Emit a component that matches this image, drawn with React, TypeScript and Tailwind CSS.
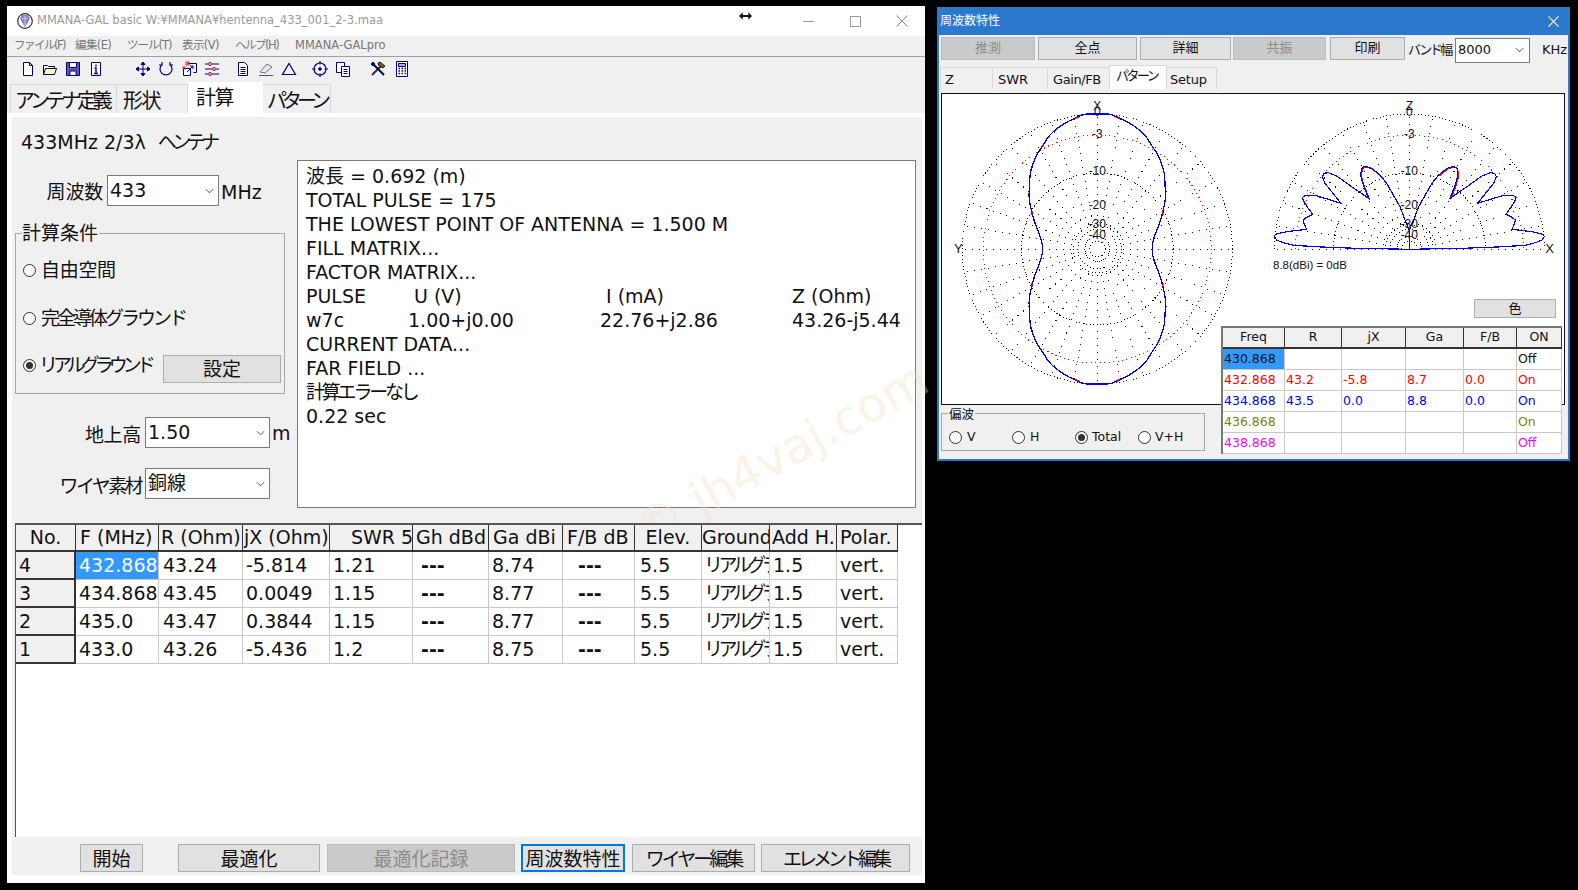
import React from "react";

const UI = { fontFamily: '"DejaVu Sans","Noto Sans CJK JP",sans-serif' };

const Ico = ({ children, className = "" }: { children: React.ReactNode; className?: string }) => (
  <svg viewBox="0 0 16 16" className={"w-[16px] h-[16px] shrink-0 " + className} fill="none" stroke="#000080" strokeWidth="1">
    {children}
  </svg>
);

function Toolbar() {
  return (
    <div className="h-[26px] flex items-center bg-[#f0f0f0] pl-[13px] pb-[2px]">
      <Ico><path d="M3.5 1.5h6l3 3v10h-9z" fill="#fff" /><path d="M9.5 1.5v3h3" /></Ico>
      <Ico className="ml-[6px]"><path d="M1.5 13.5v-9h4l1 1h6v2h2l-2 6z" fill="#fff6b0" /><path d="M1.5 13.5l2-6h11" /></Ico>
      <Ico className="ml-[7px]"><path d="M1.5 1.5h13v13h-13z" fill="#5a5ab0" /><path d="M4.5 1.5h7v5h-7zM5 10h6v4.5H5z" fill="#fff" /></Ico>
      <Ico className="ml-[7px]"><path d="M3.5 1.5h9v13h-9z" fill="#fff" /><path d="M8 3.5v2M6.500 7h1.500v5M6 12.500h4" strokeWidth="1.400" /></Ico>
      <Ico className="ml-[31px]"><path d="M8 1v14M1 8h14M8 1L6 3.500h4zM8 15l-2-2.500h4zM1 8l2.500-2v4zM15 8l-2.500-2v4z" fill="#000080" /></Ico>
      <Ico className="ml-[7px]"><path d="M4 3.500a6 6 0 1 0 8 0M4 1v3H1M12 1v3h3" strokeWidth="1.200" /></Ico>
      <Ico className="ml-[8px]"><path d="M1.500 7.500h7v7h-7z" fill="#fff" /><path d="M5.500 2.500h9v9h-3" /><path d="M5 11l6-6M8 5h3v3" /><path d="M4 1h3v3H4zM1 6h2v2H1z" stroke="#d02020" /></Ico>
      <Ico className="ml-[6px]"><path d="M1 3h14M1 8h14M1 13h14" /><path d="M5 1.500h2v3H5zM9 6.500h2v3H9zM5 11.500h2v3H5z" stroke="#d02020" fill="#fff" /></Ico>
      <Ico className="ml-[15px]"><path d="M3.500 1.500h6l3 3v10h-9z" fill="#fff" /><path d="M5.500 6.500h5M5.500 8.500h5M5.500 10.500h5M5.500 12.500h5" /></Ico>
      <Ico className="ml-[7px]"><path d="M2 11l7-8 5 3-7 6z" fill="#e8e8e8" stroke="#707090" /><path d="M1 14.500h14" stroke="#505090" /></Ico>
      <Ico className="ml-[7px]"><path d="M8 2.500l6.500 11h-13z" strokeWidth="1.200" /></Ico>
      <Ico className="ml-[15px]"><circle cx="8" cy="8" r="6" strokeWidth="1.200" /><circle cx="8" cy="8" r="1.300" fill="#000080" /><path d="M8 0v3.500M8 12.500V16M0 8h3.500M12.500 8H16" strokeWidth="1.200" /></Ico>
      <Ico className="ml-[7px]"><path d="M1.500 1.500h8v10h-8z" fill="#fff" /><path d="M6.500 5.500h8v10h-8z" fill="#fff" /><path d="M8.500 8.500h4M8.500 10.500h4M8.500 12.500h4" /></Ico>
      <Ico className="ml-[19px]"><path d="M2 14L11 5" stroke="#303030" strokeWidth="2" /><path d="M8 2l2-1 5 4-2 2-2-1-2-1z" fill="#805020" stroke="#302010" /><path d="M14 14L4 4" stroke="#000050" strokeWidth="2" /><path d="M1 3l2-2 2 2-2 2z" fill="#000050" /></Ico>
      <Ico className="ml-[8px]"><path d="M2.500 .5h11v15h-11z" fill="#fff" /><path d="M4.500 2.500h7v3h-7z" fill="#b0b0d8" /><path d="M4.500 7.500h1.500M7.500 7.500h1.500M10.500 7.500h1.500M4.500 10h1.500M7.500 10h1.500M10.500 10h1.500M4.500 12.500h1.500M7.500 12.500h1.500M10.500 12.500h1.500" strokeWidth="1.500" /></Ico>
    </div>
  );
}

function Combo({ value, w }: { value: string; w: string }) {
  return (
    <div className={"h-[31px] shrink-0 bg-white border border-[#7a7a7a] flex items-center pl-[2px] pr-[4px] text-[19px] text-[#111] " + w}>
      <span className="flex-1 leading-none">{value}</span>
      <svg viewBox="0 0 10 6" className="w-[9px] h-[6px]" fill="none" stroke="#444" strokeWidth="1"><path d="M1 1l4 4 4-4" /></svg>
    </div>
  );
}

function Radio({ on = false }: { on?: boolean }) {
  return (
    <span className="shrink-0 rounded-full bg-white border border-[#333] flex items-center justify-center w-[13px] h-[13px]">
      {on && <span className="w-[7px] h-[7px] rounded-full bg-[#333]" />}
    </span>
  );
}

function WinBtn({ label, w, disabled = false, focus = false, className = "" }: { label: string; w: string; disabled?: boolean; focus?: boolean; className?: string }) {
  const tone = disabled
    ? "bg-[#cacaca] border-[#bdbdbd] text-[#8c8c8c]"
    : focus
    ? "bg-[#e1e1e1] border-[#0078d7] border-2 text-[#111]"
    : "bg-[#e1e1e1] border-[#adadad] text-[#111]";
  return <div className={"border flex items-center justify-center whitespace-nowrap " + tone + " " + w + " " + className}>{label}</div>;
}

const colW = ["w-[60px]", "w-[83px]", "w-[84px]", "w-[87px]", "w-[83px]", "w-[76px]", "w-[74px]", "w-[72px]", "w-[67px]", "w-[68px]", "w-[67px]", "w-[61px]"];
const head = ["No.", "F (MHz)", "R (Ohm)", "jX (Ohm)", "SWR 50", "Gh dBd", "Ga dBi", "F/B dB", "Elev.", "Ground", "Add H.", "Polar."];
const headAlign = ["justify-center", "pl-[4px]", "pl-[2px]", "pl-[1px]", "pl-[21px]", "pl-[3px]", "pl-[4px]", "pl-[4px]", "justify-center", "pl-[0px]", "pl-[2px]", "pl-[3px]"];
const rows = [
  ["4", "432.868", "43.24", "-5.814", "1.21", "---", "8.74", "---", "5.5", "リアルグランド", "1.5", "vert."],
  ["3", "434.868", "43.45", "0.0049", "1.15", "---", "8.77", "---", "5.5", "リアルグランド", "1.5", "vert."],
  ["2", "435.0", "43.47", "0.3844", "1.15", "---", "8.77", "---", "5.5", "リアルグランド", "1.5", "vert."],
  ["1", "433.0", "43.26", "-5.436", "1.2", "---", "8.75", "---", "5.5", "リアルグランド", "1.5", "vert."],
];

function ResultGrid() {
  return (
    <div className="relative z-10 flex-1 ml-[3px] bg-white border-l border-t-2 border-[#555] text-[19px] text-[#111] overflow-hidden">
      <div className="flex h-[27px]">
        {head.map((h, i) => (
          <div key={h} className={"flex items-center overflow-hidden whitespace-nowrap bg-[#f0f0f0] border-r border-[#333] border-b-2 " + colW[i] + " " + headAlign[i]}>{h}</div>
        ))}
      </div>
      {rows.map((r, ri) => (
        <div key={ri} className="flex h-[28px]">
          {r.map((c, i) => (
            <div
              key={i}
              className={
                "flex items-center overflow-hidden whitespace-nowrap border-b border-r " +
                colW[i] +
                " " +
                (i === 0
                  ? "bg-[#f0f0f0] border-b-2 border-r-2 border-[#333] pl-[3px]"
                  : ri === 0 && i === 1
                  ? "bg-[#3399ff] text-white border-[#c8c8c8] pl-[3px]"
                  : i === 5
                  ? "border-[#c8c8c8] pl-[8px] font-bold"
                  : i === 7
                  ? "border-[#c8c8c8] pl-[15px] font-bold"
                  : i === 8
                  ? "border-[#c8c8c8] pl-[5px]"
                  : i === 2
                  ? "border-[#c8c8c8] pl-[4px]"
                  : i === 9
                  ? "border-[#c8c8c8] pl-[2px] text-[19px] tracking-[-4.500px]"
                  : "border-[#c8c8c8] pl-[3px]")
              }
            >
              {c}
            </div>
          ))}
        </div>
      ))}
    </div>
  );
}

function MainWindow() {
  return (
    <div className="absolute left-[7px] top-[6px] w-[918px] h-[877px] bg-white flex flex-col" style={UI}>
      <div className="h-[30px] flex items-center bg-white pl-[10px] shrink-0">
        <svg viewBox="0 0 16 16" className="w-[16px] h-[16px]">
          <circle cx="8" cy="8" r="7.300" fill="#fff" stroke="#333" strokeWidth="1.200" />
          <path d="M3.500 5.500l4.500 8 4.500-8-2-3h-5z" fill="#8c86d0" stroke="#5050a0" strokeWidth=".6" />
          <path d="M5 5.500h6M8 3v10" stroke="#d8d8f8" strokeWidth=".8" />
        </svg>
        <span className="ml-[4px] text-[11.500px] text-[#9a9a9a] whitespace-nowrap">MMANA-GAL basic W:¥MMANA¥hentenna_433_001_2-3.maa</span>
        <div className="ml-auto flex items-center h-full">
          <div className="w-[46px] flex justify-center"><div className="w-[11px] h-px bg-[#9a9a9a]" /></div>
          <div className="w-[48px] flex justify-center"><div className="w-[11px] h-[11px] border border-[#9a9a9a]" /></div>
          <div className="w-[46px] flex justify-center">
            <svg viewBox="0 0 12 12" className="w-[12px] h-[12px]" stroke="#8a8a8a" strokeWidth="1"><path d="M.5.5l11 11M11.500.5l-11 11" /></svg>
          </div>
        </div>
      </div>
      <svg viewBox="0 0 14 8" className="absolute left-[732px] top-[6px] w-[13px] h-[8px]" fill="#111"><path d="M0 4l4-4v3h6V0l4 4-4 4V5H4v3z" /></svg>

      <div className="h-[21px] flex items-center bg-[#f0f0f0] border-b border-[#a0a0a0] text-[11.500px] text-[#777] pl-[7px] shrink-0 whitespace-nowrap">
        <span className="w-[61px] tracking-[-1.500px]">ファイル(F)</span>
        <span className="w-[52px] tracking-[-.6px]">編集(E)</span>
        <span className="w-[55px] tracking-[-1px]">ツール(T)</span>
        <span className="w-[53px] tracking-[-.6px]">表示(V)</span>
        <span className="w-[60px] tracking-[-1.500px]">ヘルプ(H)</span>
        <span>MMANA-GALpro</span>
      </div>
      <Toolbar />

      <div className="h-[30px] flex items-end bg-[#f0f0f0] pl-[3px] text-[20px] text-[#111] shrink-0 whitespace-nowrap leading-none">
        <div className="w-[107px] h-[29px] bg-[#f0f0f0] border border-b-0 border-[#d9d9d9] flex items-center pl-[4px] pt-[3px] tracking-[-4.300px]">アンテナ定義</div>
        <div className="w-[71px] h-[29px] bg-[#f0f0f0] border-t border-r border-[#d9d9d9] flex items-center pl-[6px] pt-[3px] tracking-[-1.500px]">形状</div>
        <div className="w-[75px] h-[31px] -mt-[1px] bg-white flex items-center pl-[8px] tracking-[-1.500px]">計算</div>
        <div className="w-[68px] h-[29px] bg-[#f0f0f0] border-t border-r border-[#d9d9d9] flex items-center pl-[4px] pt-[3px] tracking-[-5px]">パターン</div>
      </div>

      <div className="flex-1 flex flex-col bg-[#f0f0f0] ml-[5px] mr-[3px] mt-[4px] mb-[8px] text-[19px] text-[#111] min-h-0">
        <div className="h-[406px] flex shrink-0 relative">
          <div className="w-[285px] shrink-0 flex flex-col">
            <div className="h-[30px] mt-[10px] ml-[9px] flex items-center whitespace-nowrap">433MHz 2/3λ&nbsp;&nbsp;<span className="tracking-[-4.500px]">ヘンテナ</span></div>
            <div className="flex items-center h-[31px] mt-[18px]">
              <span className="w-[95px] text-right pr-[4px] pt-[3px] tracking-[-.2px]">周波数</span>
              <Combo value="433" w="w-[112px]" />
              <span className="ml-[2px] pt-[4px]">MHz</span>
            </div>
            <div className="relative ml-[3px] mt-[27px] h-[161px] w-[270px] border border-[#a8a8a8] flex flex-col text-[19px]">
              <span className="absolute -top-[13px] left-[6px] bg-[#f0f0f0] pr-[1px] leading-[24px]">計算条件</span>
              <div className="flex items-center h-[24px] mt-[24px] pl-[7px] gap-[5px]"><Radio /><span className="tracking-[-.3px]">自由空間</span></div>
              <div className="flex items-center h-[24px] mt-[24px] pl-[7px] gap-[5px]"><Radio /><span className="tracking-[-3px]">完全導体グラウンド</span></div>
              <div className="flex items-start mt-[25px] pl-[7px]">
                <div className="flex items-center h-[20px] w-[140px] gap-[3px] whitespace-nowrap">
                  <Radio on />
                  <span className="tracking-[-5px]">リアルグラウンド</span>
                </div>
                <WinBtn label="設定" w="w-[118px]" className="h-[28px]" />
              </div>
            </div>
            <div className="flex items-center h-[31px] mt-[23px]">
              <span className="w-[133px] text-right pr-[4px] pt-[6px] tracking-[-.3px]">地上高</span>
              <Combo value="1.50" w="w-[125px]" />
              <span className="ml-[2px] pt-[2px]">m</span>
            </div>
            <div className="flex items-center h-[31px] mt-[20px]">
              <span className="w-[133px] text-right pr-[4px] pt-[6px] whitespace-nowrap tracking-[-2.600px]">ワイヤ素材</span>
              <Combo value="銅線" w="w-[125px]" />
            </div>
          </div>
          <div className="w-[619px] h-[348px] mt-[43px] bg-white border border-[#7a7a7a] pl-[8px] pt-[3px] text-[19px] leading-[24px] whitespace-nowrap">
            <div>波長 = 0.692 (m)</div>
            <div>TOTAL PULSE = 175</div>
            <div>THE LOWEST POINT OF ANTENNA = 1.500 M</div>
            <div>FILL MATRIX...</div>
            <div>FACTOR MATRIX...</div>
            <div className="flex"><span className="w-[108px]">PULSE</span><span className="w-[192px]">U (V)</span><span className="w-[186px]">I (mA)</span><span>Z (Ohm)</span></div>
            <div className="flex"><span className="w-[102px]">w7c</span><span className="w-[192px]">1.00+j0.00</span><span className="w-[192px]">22.76+j2.86</span><span>43.26-j5.44</span></div>
            <div>CURRENT DATA...</div>
            <div>FAR FIELD ...</div>
            <div className="tracking-[-3.200px]">計算エラーなし</div>
            <div>0.22 sec</div>
          </div>
        </div>
        <ResultGrid />
        <div className="h-[38px] shrink-0 flex items-start pt-[7px] pl-[68px] text-[19px] text-[#111]">
          <WinBtn label="開始" w="w-[63px]" className="h-[28px] pt-[2px]" />
          <WinBtn label="最適化" w="w-[142px]" className="h-[28px] pt-[2px] ml-[35px]" />
          <WinBtn label="最適化記録" w="w-[188px]" disabled className="h-[28px] pt-[2px] ml-[7px]" />
          <WinBtn label="周波数特性" w="w-[104px]" focus className="h-[28px] pt-[2px] ml-[6px]" />
          <WinBtn label="ワイヤー編集" w="w-[123px]" className="h-[28px] pt-[2px] ml-[7px] tracking-[-3px]" />
          <WinBtn label="エレメント編集" w="w-[149px]" className="h-[28px] pt-[2px] ml-[6px] tracking-[-4px]" />
        </div>
      </div>
    </div>
  );
}

type Pt = [number, number];

const quad: Pt[] = [
  [0, 135], [10, 135], [15, 134], [22, 131], [32, 126], [42, 119], [49, 112], [54, 104], [60, 95], [64, 86], [67, 75], [68, 59], [68, 50], [66, 39], [63, 28], [57, 12], [55, 4], [55, 0],
];

function smoothD(pts: Pt[], cx: number, cy: number) {
  const p = pts.map(([x, y]) => [cx + x, cy + y] as Pt);
  const n = p.length;
  let d = `M${p[0][0]} ${p[0][1]}`;
  for (let i = 0; i < n; i++) {
    const p0 = p[(i - 1 + n) % n];
    const p1 = p[i];
    const p2 = p[(i + 1) % n];
    const p3 = p[(i + 2) % n];
    d += `C${p1[0] + (p2[0] - p0[0]) / 6} ${p1[1] + (p2[1] - p0[1]) / 6} ${p2[0] - (p3[0] - p1[0]) / 6} ${p2[1] - (p3[1] - p1[1]) / 6} ${p2[0]} ${p2[1]}`;
  }
  return d;
}

function Pat({ cx, cy, pts, color, width }: { cx: number; cy: number; pts: Pt[]; color: string; width: number }) {
  return <polyline points={pts.map(([x, y]) => `${cx + x},${cy + y}`).join(" ")} fill="none" stroke={color} strokeWidth={width} shapeRendering="crispEdges" />;
}

const lobeZoom: Pt[] = [
  [538, 478], [490, 477], [380, 475], [275, 471], [190, 466], [160, 458], [140, 450], [133, 440], [136, 433], [170, 425], [205, 421], [230, 418], [222, 400], [220, 390], [230, 382], [248, 373], [235, 355], [222, 335], [217, 322], [228, 316], [255, 316], [295, 328], [333, 340], [305, 305], [285, 280], [277, 260], [282, 250], [295, 248], [320, 258], [365, 290], [416, 325], [400, 285], [392, 255], [395, 235], [405, 229], [425, 235], [450, 255], [470, 280], [490, 315], [510, 350], [525, 390], [538, 420],
];

function Labels({ cx, items }: { cx: number; items: [string, number][] }) {
  return (
    <>
      {items.map(([t, y]) => (
        <text key={t} x={cx} y={y} textAnchor="middle" fontSize="12" fontFamily='"Liberation Sans",sans-serif' fill="#111">{t}</text>
      ))}
    </>
  );
}

const redBits: [number, number, number, number][] = [
  [18, -132, 23, -130], [65, -38, 66, -34], [18, 132, 23, 130], [65, 38, 66, 34],
];

function Polar() {
  const L = { x: 155.3, y: 155 };
  const R = { x: 467.3, y: 155 };
  const left: Pt[] = [
    ...quad.map(([x, y]) => [x, -y] as Pt),
    ...[...quad].reverse().slice(1).map(([x, y]) => [x, y] as Pt),
    ...quad.slice(1).map(([x, y]) => [-x, y] as Pt),
    ...[...quad].reverse().slice(1, -1).map(([x, y]) => [-x, -y] as Pt),
  ];
  const lobes = lobeZoom.map(([x, y]) => [(x - 538) / 3, (y - 477) / 3] as Pt);
  const lobesR = [...lobeZoom].reverse().map(([x, y]) => [(538 - x) / 3, (y - 477) / 3] as Pt);
  const rightPts = [...lobes, ...lobesR];
  const rad = (cx: number, cy: number, half: boolean) =>
    Array.from({ length: half ? 19 : 36 }, (_, i) => {
      const a = (i * 10 * Math.PI) / 180;
      return (
        <line key={i} x1={cx + 12 * Math.cos(a)} y1={cy - 12 * Math.sin(a)} x2={cx + 135 * Math.cos(a)} y2={cy - 135 * Math.sin(a)} stroke="#111" strokeWidth="1" strokeDasharray="1 6" shapeRendering="crispEdges" />
      );
    });
  const arc = (cx: number, cy: number, r: number) => `M${cx - r} ${cy}A${r} ${r} 0 0 1 ${cx + r} ${cy}`;
  return (
    <svg viewBox="0 0 622 310" className="w-[622px] h-[310px] block">
      {rad(L.x, L.y, false)}
      {[135, 76, 24, 8].map((r) => (
        <circle key={r} cx={L.x} cy={L.y} r={r} fill="none" stroke="#111" strokeWidth="1" strokeDasharray="1 2.500" shapeRendering="crispEdges" />
      ))}
      <circle cx={L.x} cy={L.y} r={114} fill="none" stroke="#f00" strokeWidth="1" strokeDasharray="1 3.500" shapeRendering="crispEdges" />
      <path d={smoothD(left, L.x, L.y)} fill="none" stroke="#0000f0" strokeWidth="1.300" shapeRendering="crispEdges" />
      {redBits.flatMap(([a, b, c, d], i) => [
        <line key={"a" + i} x1={L.x + a} y1={L.y + b} x2={L.x + c} y2={L.y + d} stroke="#f00" strokeWidth="1.300" />,
        <line key={"b" + i} x1={L.x - a} y1={L.y + b} x2={L.x - c} y2={L.y + d} stroke="#f00" strokeWidth="1.300" />,
      ])}
      <Labels cx={L.x} items={[["X", 16], ["0", 22], ["-3", 44], ["-10", 81], ["-20", 115], ["-30", 134], ["-40", 145]]} />
      <text x={12} y={159} fontSize="13" fontFamily='"Liberation Sans",sans-serif' fill="#111">Y</text>

      {rad(R.x, R.y, true)}
      {[135, 76, 24, 8].map((r) => (
        <path key={r} d={arc(R.x, R.y, r)} fill="none" stroke="#111" strokeWidth="1" strokeDasharray="1 2.500" shapeRendering="crispEdges" />
      ))}
      <path d={arc(R.x, R.y, 114)} fill="none" stroke="#f00" strokeWidth="1" strokeDasharray="1 3.500" shapeRendering="crispEdges" />
      <Pat cx={R.x + 0.7} cy={R.y + 0.7} pts={rightPts.slice(30, 37)} color="#f00" width={1.200} />
      <Pat cx={R.x + 0.7} cy={R.y + 0.7} pts={rightPts.slice(47, 54)} color="#f00" width={1.200} />
      <Pat cx={R.x} cy={R.y} pts={rightPts} color="#0000f0" width={1.200} />
      <line x1={R.x} y1={R.y - 20} x2={R.x} y2={R.y + 1} stroke="#0000f0" strokeWidth="1.200" shapeRendering="crispEdges" />
      <Labels cx={R.x} items={[["Z", 16], ["0", 22], ["-3", 44], ["-10", 81], ["-20", 115], ["-30", 134], ["-40", 145]]} />
      <text x={R.x + 136} y={159} fontSize="13" fontFamily='"Liberation Sans",sans-serif' fill="#111">X</text>
      <text x={331} y={175} fontSize="11.500" fontFamily='"Liberation Sans",sans-serif' fill="#111">8.8(dBi) = 0dB</text>
    </svg>
  );
}

const fcols = ["w-[62px]", "w-[57px]", "w-[64px]", "w-[58px]", "w-[53px]", "w-[45px]"];
const fhead = ["Freq", "R", "jX", "Ga", "F/B", "ON"];
const frows: { c: string; v: string[]; sel?: boolean }[] = [
  { c: "text-[#111]", v: ["430.868", "", "", "", "", "Off"], sel: true },
  { c: "text-[#ff0000]", v: ["432.868", "43.2", "-5.8", "8.7", "0.0", "On"] },
  { c: "text-[#0000ff]", v: ["434.868", "43.5", "0.0", "8.8", "0.0", "On"] },
  { c: "text-[#808000]", v: ["436.868", "", "", "", "", "On"] },
  { c: "text-[#ff00ff]", v: ["438.868", "", "", "", "", "Off"] },
];

function FreqGrid() {
  return (
    <div className="absolute left-[282px] top-[237px] w-[341px] bg-white border-l-2 border-t-2 border-[#777] text-[12.500px]">
      <div className="flex h-[21px]">
        {fhead.map((h, i) => (
          <div key={h} className={"flex items-center justify-center bg-[#f0f0f0] border-r border-[#333] border-b-2 " + fcols[i]}>{h}</div>
        ))}
      </div>
      {frows.map((r, ri) => (
        <div key={ri} className={"flex h-[21px] " + r.c}>
          {r.v.map((v, i) => (
            <div key={i} className={"flex items-center pl-[1px] border-b border-r border-[#c8c8c8] " + fcols[i] + (r.sel && i === 0 ? " bg-[#3399ff]" : "")}>{v}</div>
          ))}
        </div>
      ))}
    </div>
  );
}

function FreqWindow() {
  return (
    <div className="absolute left-[937px] top-[7px] w-[633px] h-[454px] bg-[#f0f0f0] border-2 border-t-0 border-[#2b79cf] flex flex-col text-[#111]" style={UI}>
      <div className="h-[28px] -mx-[2px] bg-[#2b79cf] text-white text-[12px] flex items-center pl-[3px] pr-[11px] justify-between shrink-0">
        <span>周波数特性</span>
        <svg viewBox="0 0 12 12" className="w-[11px] h-[11px]" stroke="#fff" strokeWidth="1.200"><path d="M.5.5l11 11M11.500.5l-11 11" /></svg>
      </div>
      <div className="h-[30px] flex items-center pl-[2px] text-[13px] shrink-0">
        <WinBtn label="推測" w="w-[94px]" disabled className="h-[23px] mt-[-4px]" />
        <WinBtn label="全点" w="w-[99px]" className="h-[23px] mt-[-4px] ml-[3px]" />
        <WinBtn label="詳細" w="w-[91px]" className="h-[23px] mt-[-4px] ml-[3px]" />
        <WinBtn label="共振" w="w-[93px]" disabled className="h-[23px] mt-[-4px] ml-[2px]" />
        <WinBtn label="印刷" w="w-[75px]" className="h-[23px] mt-[-4px] ml-[4px]" />
        <span className="ml-[3px] w-[47px] whitespace-nowrap tracking-[-2.500px]">バンド幅</span>
        <div className="w-[75px] h-[25px] bg-white border border-[#7a7a7a] flex items-center pl-[2px] pr-[5px]">
          <span className="flex-1">8000</span>
          <svg viewBox="0 0 10 6" className="w-[9px] h-[6px]" fill="none" stroke="#444"><path d="M1 1l4 4 4-4" /></svg>
        </div>
        <span className="ml-[12px]">KHz</span>
      </div>
      <div className="h-[24px] flex items-end pl-[1px] text-[13px] shrink-0">
        <div className="w-[53px] h-[22px] border-t border-l border-r border-[#d9d9d9] flex items-center pl-[4px] pt-[2px]">Z</div>
        <div className="w-[55px] h-[22px] border-t border-r border-[#d9d9d9] flex items-center pl-[5px] pt-[2px]">SWR</div>
        <div className="w-[61px] h-[22px] border-t border-[#d9d9d9] flex items-center pl-[5px] pt-[2px] whitespace-nowrap tracking-[-.4px]">Gain/FB</div>
        <div className="w-[58px] h-[24px] bg-white border-l border-t border-r border-[#d9d9d9] flex items-center pl-[6px] tracking-[-2.500px] whitespace-nowrap pb-[3px]">パターン</div>
        <div className="w-[50px] h-[22px] border-t border-r border-[#d9d9d9] flex items-center pl-[3px] pt-[2px] tracking-[-.2px]">Setup</div>
      </div>
      <div className="relative flex-1 flex flex-col pt-[4px] pl-[2px] pb-[8px] min-h-0">
        <div className="relative w-[624px] h-[312px] bg-white border border-[#111] shrink-0 overflow-hidden">
          <Polar />
          <WinBtn label="色" w="w-[82px]" className="absolute left-[532px] top-[205px] h-[19px] text-[13px]" />
        </div>
        <div className="relative w-[264px] h-[40px] mt-[8px] border border-[#a8a8a8] flex items-center text-[12.500px]">
          <span className="absolute -top-[6px] left-[6px] bg-[#f0f0f0] px-[1px] leading-[14px]">偏波</span>
          <div className="w-[63px] pl-[7px] flex items-center gap-[5px] pt-[10px]"><Radio /><span>V</span></div>
          <div className="w-[63px] pl-[7px] flex items-center gap-[5px] pt-[10px]"><Radio /><span>H</span></div>
          <div className="w-[63px] pl-[7px] flex items-center gap-[4px] pt-[10px]"><Radio on /><span>Total</span></div>
          <div className="pl-[7px] flex items-center gap-[4px] pt-[10px]"><Radio /><span>V+H</span></div>
        </div>
        <FreqGrid />
      </div>
    </div>
  );
}

export default function App() {
  return (
    <div className="relative w-[1578px] h-[890px] bg-black overflow-hidden">
      <MainWindow />
      <FreqWindow />
      <div
        className="absolute left-[618px] top-[430px] text-[48px] leading-none whitespace-nowrap pointer-events-none text-[#f9ddb8] opacity-35 -rotate-[29deg]"
        style={{ fontFamily: '"DejaVu Sans",sans-serif' }}
      >
        © jh4vaj.com
      </div>
    </div>
  );
}
